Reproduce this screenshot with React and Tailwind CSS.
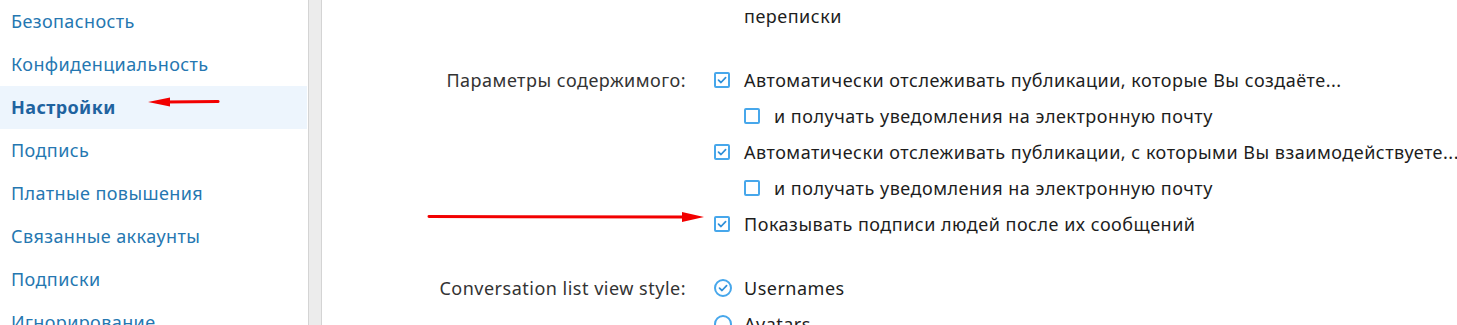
import React from "react";

const navItems = [
  "Безопасность",
  "Конфиденциальность",
  "Настройки",
  "Подпись",
  "Платные повышения",
  "Связанные аккаунты",
  "Подписки",
  "Игнорирование",
];

const Check = ({ checked }) => (
  <span className="w-4 h-4 shrink-0 rounded-[2px] border-2 border-[#47a7eb] flex items-center justify-center">
    {checked && (
      <svg width="10" height="10" viewBox="0 0 10 10" fill="none">
        <path d="M1.5 5.2 L4 7.5 L8.6 2.6" stroke="#2f8fd8" strokeWidth="1.7" strokeLinecap="round" strokeLinejoin="round" />
      </svg>
    )}
  </span>
);

const Radio = ({ checked }) => (
  <span className="w-[18px] h-[18px] shrink-0 rounded-full border-2 border-[#47a7eb] flex items-center justify-center">
    {checked && (
      <svg width="10" height="10" viewBox="0 0 10 10" fill="none">
        <path d="M1.5 5.2 L4 7.5 L8.6 2.6" stroke="#2f8fd8" strokeWidth="1.7" strokeLinecap="round" strokeLinejoin="round" />
      </svg>
    )}
  </span>
);

const Row = ({ label, indent, children }) => (
  <div className="flex h-9 items-center">
    <div className="w-[392px] shrink-0 pr-[28px] text-right text-[#333]">{label}</div>
    <div className={`flex items-center whitespace-nowrap ${indent ? "pl-[30px]" : ""}`}>{children}</div>
  </div>
);

export default function App() {
  return (
    <div className="relative flex w-[1457px] h-[325px] overflow-hidden bg-white" style={{ fontFamily: '"Noto Sans", "Open Sans", sans-serif' }}>
      <nav className="w-[307px] shrink-0 bg-white">
        {navItems.map((item) => (
          <div
            key={item}
            className={`h-[43px] flex items-center pl-[11px] text-[18px] tracking-[0.4px] ${
              item === "Настройки" ? "bg-[#edf5fd] font-bold text-[#1f63a0]" : "text-[#2577b1]"
            }`}
          >
            {item}
          </div>
        ))}
      </nav>
      <div className="ml-px w-[14px] shrink-0 bg-[#ececec] border-x border-[#d4d4d4]" />
      <main className="flex-1 min-w-0 text-[18px] tracking-[0.5px] text-[#1d1d1d]">
        <div className="h-8 flex items-center pl-[422px]">переписки</div>
        <div className="mt-[30px]">
          <Row label="Параметры содержимого:">
            <Check checked />
            <span className="ml-[14px]">Автоматически отслеживать публикации, которые Вы создаёте...</span>
          </Row>
          <Row indent>
            <Check />
            <span className="ml-[14px]">и получать уведомления на электронную почту</span>
          </Row>
          <Row>
            <Check checked />
            <span className="ml-[14px]">Автоматически отслеживать публикации, с которыми Вы взаимодействуете...</span>
          </Row>
          <Row indent>
            <Check />
            <span className="ml-[14px]">и получать уведомления на электронную почту</span>
          </Row>
          <Row>
            <Check checked />
            <span className="ml-[14px]">Показывать подписи людей после их сообщений</span>
          </Row>
        </div>
        <div className="mt-[28px]">
          <Row label="Conversation list view style:">
            <Radio checked />
            <span className="ml-[12px]">Usernames</span>
          </Row>
          <Row>
            <Radio />
            <span className="ml-[12px]">Avatars</span>
          </Row>
        </div>
      </main>

      <svg className="absolute left-[146px] top-[95px]" width="76" height="14" viewBox="0 0 76 14">
        <line x1="20" y1="7" x2="72" y2="6.5" stroke="#f20000" strokeWidth="3" strokeLinecap="round" />
        <polygon points="2,7 24,2.5 24,11.5" fill="#f20000" />
      </svg>
      <svg className="absolute left-[426px] top-[209px]" width="282" height="16" viewBox="0 0 282 16">
        <line x1="3" y1="7.5" x2="262" y2="8" stroke="#f20000" strokeWidth="3" strokeLinecap="round" />
        <polygon points="256,3 278,8 256,13" fill="#f20000" />
      </svg>
    </div>
  );
}
